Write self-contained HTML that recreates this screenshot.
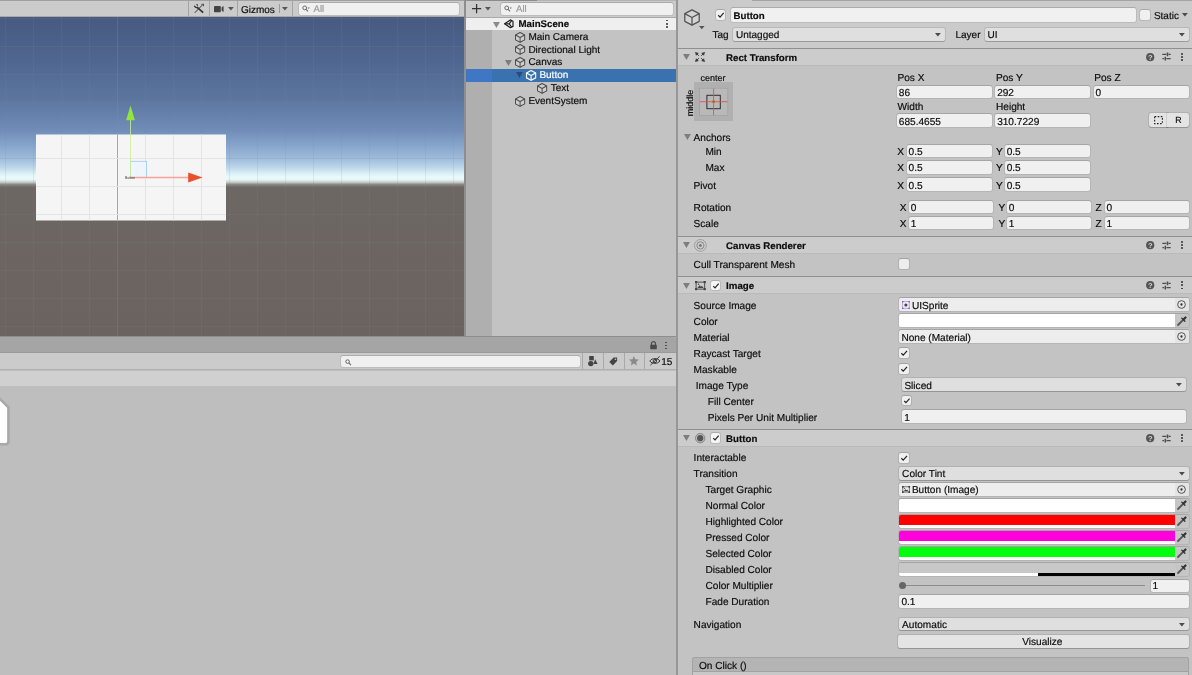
<!DOCTYPE html>
<html><head><meta charset="utf-8"><title>Unity Editor</title>
<style>
html,body{margin:0;padding:0;}
body{width:1192px;height:675px;overflow:hidden;background:#c3c3c3;position:relative;font-family:"Liberation Sans",sans-serif;}
.a,.t,.f,.dd,.cb,.btn{position:absolute;box-sizing:border-box;}
.t{white-space:nowrap;line-height:12px;letter-spacing:0;text-rendering:geometricPrecision;-webkit-text-stroke:0.18px currentColor;}
.f{border-radius:2px;box-shadow:0 0 0 1px rgba(0,0,0,.07),0 -1px 0 0 rgba(0,0,0,.09);}
.dd{background:#dfdfdf;border-radius:2px;box-shadow:0 0 0 1px rgba(0,0,0,.09),0 1px 0 0 rgba(0,0,0,.16);}
.cb{border-radius:2px;box-shadow:0 0 0 1px rgba(0,0,0,.09),0 -1px 0 0 rgba(0,0,0,.08);}
.btn{background:#e4e4e4;border-radius:2px;box-shadow:0 0 0 1px rgba(0,0,0,.09),0 1px 0 0 rgba(0,0,0,.16);}
svg{overflow:visible;}
#root{position:absolute;left:0;top:0;width:1192px;height:675px;will-change:transform;}
</style></head><body><div id="root">
<svg class="a" style="left:0.00px;top:0.00px;" width="465" height="337" viewBox="0 0 465 337"><defs><linearGradient id="sky" x1="0" y1="17.0" x2="0" y2="336.6" gradientUnits="userSpaceOnUse">
<stop offset="0" stop-color="#475a80"/>
<stop offset="0.1345" stop-color="#4f6690"/>
<stop offset="0.2597" stop-color="#5c769f"/>
<stop offset="0.3536" stop-color="#6f8db8"/>
<stop offset="0.4005" stop-color="#86a4cb"/>
<stop offset="0.4412" stop-color="#9dbada"/>
<stop offset="0.4693" stop-color="#bbd5e8"/>
<stop offset="0.4881" stop-color="#d8eef5"/>
<stop offset="0.5006" stop-color="#e8fbfb"/>
<stop offset="0.5084" stop-color="#e6f6f5"/>
<stop offset="0.5163" stop-color="#c9d2cf"/>
<stop offset="0.5241" stop-color="#8d8884"/>
<stop offset="0.5319" stop-color="#6d6763"/>
<stop offset="1" stop-color="#6a635f"/>
</linearGradient></defs>
<rect x="0" y="17.0" width="464.5" height="319.6" fill="url(#sky)"/>
<rect x="5.0" y="17.0" width="1" height="319.6" fill="#888888" opacity="0.15"/><rect x="33.0" y="17.0" width="1" height="319.6" fill="#888888" opacity="0.15"/><rect x="61.0" y="17.0" width="1" height="319.6" fill="#888888" opacity="0.15"/><rect x="89.0" y="17.0" width="1" height="319.6" fill="#888888" opacity="0.15"/><rect x="117.0" y="17.0" width="1" height="319.6" fill="#8c8c8c" opacity="0.32"/><rect x="145.0" y="17.0" width="1" height="319.6" fill="#888888" opacity="0.15"/><rect x="173.0" y="17.0" width="1" height="319.6" fill="#888888" opacity="0.15"/><rect x="201.0" y="17.0" width="1" height="319.6" fill="#888888" opacity="0.15"/><rect x="229.0" y="17.0" width="1" height="319.6" fill="#888888" opacity="0.15"/><rect x="257.0" y="17.0" width="1" height="319.6" fill="#888888" opacity="0.15"/><rect x="285.0" y="17.0" width="1" height="319.6" fill="#888888" opacity="0.15"/><rect x="313.0" y="17.0" width="1" height="319.6" fill="#888888" opacity="0.15"/><rect x="341.0" y="17.0" width="1" height="319.6" fill="#888888" opacity="0.15"/><rect x="369.0" y="17.0" width="1" height="319.6" fill="#888888" opacity="0.15"/><rect x="397.0" y="17.0" width="1" height="319.6" fill="#888888" opacity="0.15"/><rect x="425.0" y="17.0" width="1" height="319.6" fill="#888888" opacity="0.15"/><rect x="453.0" y="17.0" width="1" height="319.6" fill="#888888" opacity="0.15"/><rect x="0" y="18.0" width="464.5" height="1" fill="#888888" opacity="0.17"/><rect x="0" y="46.0" width="464.5" height="1" fill="#888888" opacity="0.17"/><rect x="0" y="74.0" width="464.5" height="1" fill="#888888" opacity="0.17"/><rect x="0" y="102.0" width="464.5" height="1" fill="#888888" opacity="0.17"/><rect x="0" y="130.0" width="464.5" height="1" fill="#888888" opacity="0.17"/><rect x="0" y="158.0" width="464.5" height="1" fill="#888888" opacity="0.17"/><rect x="0" y="186.0" width="464.5" height="1" fill="#888888" opacity="0.17"/><rect x="0" y="214.0" width="464.5" height="1" fill="#888888" opacity="0.17"/><rect x="0" y="242.0" width="464.5" height="1" fill="#888888" opacity="0.17"/><rect x="0" y="270.0" width="464.5" height="1" fill="#888888" opacity="0.17"/><rect x="0" y="298.0" width="464.5" height="1" fill="#888888" opacity="0.17"/><rect x="0" y="326.0" width="464.5" height="1" fill="#888888" opacity="0.17"/>
<rect x="36" y="134.5" width="190" height="86" fill="#f5f5f5"/>
<rect x="61.0" y="134.5" width="1" height="86" fill="#e4e4e4"/><rect x="89.0" y="134.5" width="1" height="86" fill="#e4e4e4"/><rect x="117.0" y="134.5" width="1" height="86" fill="#a6a6a6"/><rect x="145.0" y="134.5" width="1" height="86" fill="#e4e4e4"/><rect x="173.0" y="134.5" width="1" height="86" fill="#e4e4e4"/><rect x="201.0" y="134.5" width="1" height="86" fill="#e4e4e4"/><rect x="36" y="158.0" width="190" height="1" fill="#e4e4e4"/><rect x="36" y="186.0" width="190" height="1" fill="#e4e4e4"/><rect x="36" y="214.0" width="190" height="1" fill="#e4e4e4"/>
<rect x="130.5" y="161.3" width="16" height="16.2" fill="#eef5fd" stroke="#9cc6f2" stroke-width="0.8"/>
<path d="M130.5 120V177.5" stroke="#cdec98" stroke-width="0.8"/>
<path d="M130.5 105.5L126.1 120.2H134.9Z" fill="#8fe63c"/>
<path d="M130.5 177.5H189" stroke="#f6a496" stroke-width="1.3"/>
<path d="M202.6 177.5L188.2 172.5V182.5Z" fill="#e8512d"/>
<text x="125" y="178.6" font-size="3.4" fill="#333" font-family="Liberation Sans, sans-serif">Button</text>
</svg>
<div class="a" style="left:0.00px;top:0.00px;width:465.00px;height:17.00px;background:#cbcbcb;"></div>
<div class="a" style="left:0.00px;top:0.00px;width:465.00px;height:0.80px;background:#a0a0a0;"></div>
<div class="a" style="left:0.00px;top:16.40px;width:465.00px;height:0.80px;background:#a9a9a9;"></div>
<div class="a" style="left:188.40px;top:1.00px;width:1.00px;height:15.60px;background:#a4a4a4;"></div>
<div class="a" style="left:209.40px;top:1.00px;width:1.00px;height:15.60px;background:#a4a4a4;"></div>
<div class="a" style="left:237.40px;top:1.00px;width:1.00px;height:15.60px;background:#a4a4a4;"></div>
<div class="a" style="left:291.70px;top:1.00px;width:1.00px;height:15.60px;background:#a4a4a4;"></div>
<svg class="a" style="left:193.60px;top:4.20px;" width="10.4" height="9.2" viewBox="0 0 10.4 9.2"><g stroke="#333" fill="none"><path d="M0.8 8.8L8.2 1.2" stroke-width="1.0"/><path d="M7.4 0.4L9.6 0.2L9.4 2.2" stroke-width="0.9"/><path d="M3.2 3.4L9.2 8.6" stroke-width="1.7"/><path d="M0.4 1.8C0.9 3.6 2.8 4 3.9 3.1" stroke-width="1.3"/><path d="M2.6 0.2L3.8 1.6" stroke-width="1.1"/></g></svg>
<svg class="a" style="left:214.20px;top:5.60px;" width="10" height="6.4" viewBox="0 0 10 6.4"><rect x="0" y="0" width="6.8" height="6.2" rx="0.8" fill="#444"/><path d="M7.6 1.6C8.4 0.6 9 0.2 9.6 0.2V6C9 6 8.4 5.6 7.6 4.6Z" fill="#444"/></svg>
<svg class="a" style="left:227.90px;top:7.10px;" width="5.8" height="3.6" viewBox="0 0 5.8 3.6"><path d="M0 0H5.8L2.9 3.6Z" fill="#555"/></svg>
<div class="t" style="left:240.90px;top:5.00px;font-size:10px;color:#0d0d0d;">Gizmos</div>
<div class="a" style="left:278.60px;top:4.20px;width:0.90px;height:9.20px;background:#999;"></div>
<svg class="a" style="left:282.40px;top:7.10px;" width="5.8" height="3.6" viewBox="0 0 5.8 3.6"><path d="M0 0H5.8L2.9 3.6Z" fill="#555"/></svg>
<div class="f" style="left:298.60px;top:3.00px;width:160.00px;height:11.60px;background:#f0f0f0;"></div>
<svg class="a" style="left:302.20px;top:5.30px;" width="8" height="7" viewBox="0 0 8 7"><circle cx="2.7" cy="2.9" r="1.9" fill="none" stroke="#6a6a6a" stroke-width="1"/><path d="M4.1 4.4L6 6.4" stroke="#6a6a6a" stroke-width="1.1"/><path d="M5.6 2.6h2.2l-1.1 1.3z" fill="#6a6a6a"/></svg>
<div class="t" style="left:313.50px;top:4.00px;font-size:9.6px;color:#9a9a9a;">All</div>
<div class="a" style="left:464.30px;top:0.00px;width:1.70px;height:337.00px;background:#8e8e8e;"></div>
<div class="a" style="left:466.00px;top:0.00px;width:210.20px;height:337.00px;background:#c3c3c3;"></div>
<div class="a" style="left:466.00px;top:17.60px;width:25.60px;height:319.40px;background:#afafaf;"></div>
<div class="a" style="left:466.00px;top:0.00px;width:210.20px;height:17.60px;background:#cbcbcb;"></div>
<div class="a" style="left:466.00px;top:0.00px;width:71.00px;height:0.80px;background:#8c8c8c;"></div>
<div class="a" style="left:537.00px;top:0.00px;width:139.20px;height:0.80px;background:#b4b4b4;"></div>
<div class="a" style="left:466.00px;top:17.00px;width:210.20px;height:0.80px;background:#a9a9a9;"></div>
<svg class="a" style="left:471.60px;top:4.20px;" width="9.2" height="9.2" viewBox="0 0 9.2 9.2"><path d="M4.6 0V9.2M0 4.6H9.2" stroke="#333" stroke-width="1.25"/></svg>
<svg class="a" style="left:485.00px;top:7.00px;" width="5.8" height="3.6" viewBox="0 0 5.8 3.6"><path d="M0 0H5.8L2.9 3.6Z" fill="#555"/></svg>
<div class="f" style="left:501.00px;top:3.00px;width:172.00px;height:11.60px;background:#f0f0f0;"></div>
<svg class="a" style="left:504.30px;top:5.30px;" width="8" height="7" viewBox="0 0 8 7"><circle cx="2.7" cy="2.9" r="1.9" fill="none" stroke="#6a6a6a" stroke-width="1"/><path d="M4.1 4.4L6 6.4" stroke="#6a6a6a" stroke-width="1.1"/><path d="M5.6 2.6h2.2l-1.1 1.3z" fill="#6a6a6a"/></svg>
<div class="t" style="left:516.00px;top:4.00px;font-size:9.6px;color:#9a9a9a;">All</div>
<div class="a" style="left:466.00px;top:17.90px;width:210.20px;height:12.40px;background:#efefef;"></div>
<svg class="a" style="left:493.45px;top:21.70px;" width="6.9" height="6.0" viewBox="0 0 6.9 6.0"><path d="M0 0H6.9L3.45 6.0Z" fill="#8a8a8a"/></svg>
<svg class="a" style="left:504.00px;top:18.70px;" width="9.6" height="9.6" viewBox="0 0 9.6 9.6"><g fill="none" stroke="#222" stroke-width="1.2" stroke-linejoin="round"><path d="M0.6 4.8L6.4 0.9L9 2.2V7.4L6.4 8.7Z"/><path d="M0.6 4.8H5.2M5.2 4.8L7.6 1.6M5.2 4.8L7.6 8"/></g></svg>
<div class="t" style="left:518.50px;top:19.00px;font-size:9.7px;color:#0d0d0d;font-weight:bold;">MainScene</div>
<div class="a" style="left:666.15px;top:19.95px;width:1.50px;height:1.50px;background:#444;border-radius:50%;"></div>
<div class="a" style="left:666.15px;top:23.05px;width:1.50px;height:1.50px;background:#444;border-radius:50%;"></div>
<div class="a" style="left:666.15px;top:26.15px;width:1.50px;height:1.50px;background:#444;border-radius:50%;"></div>
<svg class="a" style="left:514.80px;top:31.50px;" width="10.2" height="10.9" viewBox="0 0 16 16" preserveAspectRatio="none"><path d="M8 0.8L15.2 4.4V11.6L8 15.2L0.8 11.6V4.4Z" fill="#cfcfcf"/><g fill="none" stroke="#4c4c4c" stroke-width="1.57" stroke-linejoin="round"><path d="M8 0.8L15.2 4.4V11.6L8 15.2L0.8 11.6V4.4Z"/><path d="M0.8 4.4L8 8L15.2 4.4M8 8V15.2"/></g></svg>
<div class="t" style="left:528.40px;top:32.00px;font-size:10px;color:#0d0d0d;">Main Camera</div>
<svg class="a" style="left:514.80px;top:44.30px;" width="10.2" height="10.9" viewBox="0 0 16 16" preserveAspectRatio="none"><path d="M8 0.8L15.2 4.4V11.6L8 15.2L0.8 11.6V4.4Z" fill="#cfcfcf"/><g fill="none" stroke="#4c4c4c" stroke-width="1.57" stroke-linejoin="round"><path d="M8 0.8L15.2 4.4V11.6L8 15.2L0.8 11.6V4.4Z"/><path d="M0.8 4.4L8 8L15.2 4.4M8 8V15.2"/></g></svg>
<div class="t" style="left:528.40px;top:45.00px;font-size:10px;color:#0d0d0d;">Directional Light</div>
<svg class="a" style="left:504.65px;top:59.60px;" width="6.9" height="6.0" viewBox="0 0 6.9 6.0"><path d="M0 0H6.9L3.45 6.0Z" fill="#7d7d7d"/></svg>
<svg class="a" style="left:514.80px;top:57.10px;" width="10.2" height="10.9" viewBox="0 0 16 16" preserveAspectRatio="none"><path d="M8 0.8L15.2 4.4V11.6L8 15.2L0.8 11.6V4.4Z" fill="#cfcfcf"/><g fill="none" stroke="#4c4c4c" stroke-width="1.57" stroke-linejoin="round"><path d="M8 0.8L15.2 4.4V11.6L8 15.2L0.8 11.6V4.4Z"/><path d="M0.8 4.4L8 8L15.2 4.4M8 8V15.2"/></g></svg>
<div class="t" style="left:528.40px;top:57.00px;font-size:10px;color:#0d0d0d;">Canvas</div>
<div class="a" style="left:466.00px;top:69.00px;width:210.20px;height:12.50px;background:#3a72b0;"></div>
<div class="a" style="left:466.00px;top:69.00px;width:25.60px;height:12.50px;background:#3f77c4;"></div>
<svg class="a" style="left:515.65px;top:72.40px;" width="6.9" height="6.0" viewBox="0 0 6.9 6.0"><path d="M0 0H6.9L3.45 6.0Z" fill="#2a4d78"/></svg>
<svg class="a" style="left:525.80px;top:69.90px;" width="10.2" height="10.9" viewBox="0 0 16 16" preserveAspectRatio="none"><g fill="none" stroke="#ffffff" stroke-width="1.73" stroke-linejoin="round"><path d="M8 0.8L15.2 4.4V11.6L8 15.2L0.8 11.6V4.4Z"/><path d="M0.8 4.4L8 8L15.2 4.4M8 8V15.2"/></g></svg>
<div class="t" style="left:539.40px;top:70.00px;font-size:10px;color:#fff;">Button</div>
<svg class="a" style="left:536.80px;top:82.70px;" width="10.2" height="10.9" viewBox="0 0 16 16" preserveAspectRatio="none"><path d="M8 0.8L15.2 4.4V11.6L8 15.2L0.8 11.6V4.4Z" fill="#cfcfcf"/><g fill="none" stroke="#4c4c4c" stroke-width="1.57" stroke-linejoin="round"><path d="M8 0.8L15.2 4.4V11.6L8 15.2L0.8 11.6V4.4Z"/><path d="M0.8 4.4L8 8L15.2 4.4M8 8V15.2"/></g></svg>
<div class="t" style="left:550.70px;top:83.00px;font-size:10px;color:#0d0d0d;">Text</div>
<svg class="a" style="left:514.80px;top:95.50px;" width="10.2" height="10.9" viewBox="0 0 16 16" preserveAspectRatio="none"><path d="M8 0.8L15.2 4.4V11.6L8 15.2L0.8 11.6V4.4Z" fill="#cfcfcf"/><g fill="none" stroke="#4c4c4c" stroke-width="1.57" stroke-linejoin="round"><path d="M8 0.8L15.2 4.4V11.6L8 15.2L0.8 11.6V4.4Z"/><path d="M0.8 4.4L8 8L15.2 4.4M8 8V15.2"/></g></svg>
<div class="t" style="left:528.40px;top:96.00px;font-size:10px;color:#0d0d0d;">EventSystem</div>
<div class="a" style="left:0.00px;top:336.60px;width:676.20px;height:338.40px;background:#bebebe;"></div>
<div class="a" style="left:0.00px;top:336.60px;width:676.20px;height:16.00px;background:#a5a5a5;border-radius:0 2px 0 0;"></div>
<div class="a" style="left:0.00px;top:336.40px;width:676.20px;height:0.90px;background:#8e8e8e;"></div>
<div class="a" style="left:0.00px;top:352.60px;width:676.20px;height:17.00px;background:#cbcbcb;"></div>
<div class="a" style="left:0.00px;top:352.30px;width:676.20px;height:0.70px;background:#999;"></div>
<div class="a" style="left:0.00px;top:369.30px;width:676.20px;height:1.20px;background:#b0b0b0;"></div>
<div class="a" style="left:0.00px;top:370.50px;width:676.20px;height:15.20px;background:#d0d0d0;"></div>
<svg class="a" style="left:649.70px;top:341.20px;" width="7" height="8.4" viewBox="0 0 7 8.4"><path d="M1.5 4V2.6a2 2 0 0 1 4 0V4" fill="none" stroke="#4a4a4a" stroke-width="1.2"/><rect x="0.2" y="3.8" width="6.6" height="4.4" rx="0.6" fill="#4a4a4a"/></svg>
<div class="a" style="left:665.35px;top:341.75px;width:1.50px;height:1.50px;background:#444;border-radius:50%;"></div>
<div class="a" style="left:665.35px;top:344.85px;width:1.50px;height:1.50px;background:#444;border-radius:50%;"></div>
<div class="a" style="left:665.35px;top:347.95px;width:1.50px;height:1.50px;background:#444;border-radius:50%;"></div>
<div class="f" style="left:340.60px;top:355.60px;width:239.60px;height:11.80px;background:#f0f0f0;"></div>
<svg class="a" style="left:345.20px;top:358.60px;" width="7" height="7" viewBox="0 0 7 7"><circle cx="2.6" cy="2.6" r="1.8" fill="none" stroke="#666" stroke-width="1"/><path d="M4 4L6 6.2" stroke="#666" stroke-width="1.1"/></svg>
<div class="a" style="left:582.00px;top:353.20px;width:1.00px;height:16.00px;background:#a9a9a9;"></div>
<div class="a" style="left:602.90px;top:353.20px;width:1.00px;height:16.00px;background:#a9a9a9;"></div>
<div class="a" style="left:623.50px;top:353.20px;width:1.00px;height:16.00px;background:#a9a9a9;"></div>
<div class="a" style="left:643.90px;top:353.20px;width:1.00px;height:16.00px;background:#a9a9a9;"></div>
<svg class="a" style="left:587.50px;top:356.00px;" width="9.6" height="10.4" viewBox="0 0 9.6 10.4"><rect x="1.2" y="0" width="4.6" height="4.4" fill="#444"/><circle cx="2.8" cy="7.6" r="2.7" fill="#444"/><path d="M7.2 3.2L9.6 8H5.4Z" fill="#444"/></svg>
<svg class="a" style="left:608.60px;top:356.60px;" width="8.6" height="8.6" viewBox="0 0 8.6 8.6"><path d="M0.3 4.9L4.6 0.6H8.1V4.1L3.8 8.4Z" fill="#444"/><circle cx="6.5" cy="2.2" r="0.8" fill="#cbcbcb"/></svg>
<svg class="a" style="left:629.20px;top:356.20px;" width="9.8" height="9.4" viewBox="0 0 9.8 9.4"><path d="M4.9 0L6.3 3.2L9.8 3.6L7.2 5.9L7.9 9.4L4.9 7.6L1.9 9.4L2.6 5.9L0 3.6L3.5 3.2Z" fill="#8a8a8a"/></svg>
<svg class="a" style="left:648.60px;top:356.40px;" width="12.2" height="9.6" viewBox="0 0 12.2 9.6"><g fill="none" stroke="#333" stroke-width="0.95"><path d="M0.8 5C3 1.8 8.6 1.8 11 5C8.6 8.2 3 8.2 0.8 5Z"/><circle cx="5.9" cy="5" r="1.7"/><path d="M1.4 9.2L10.6 0.4"/></g></svg>
<div class="t" style="left:661.20px;top:357.00px;font-size:10px;color:#0d0d0d;">15</div>
<svg class="a" style="left:0.00px;top:396.00px;overflow:hidden;" width="12" height="52" viewBox="0 0 12 52"><path d="M-3 0.1L8.45 11.2V45.6Q8.45 48.2 5.8 48.2H-3Z" fill="#fff" stroke="#a9a9a9" stroke-width="2.6" stroke-linejoin="round"/></svg>
<div class="a" style="left:676.20px;top:0.00px;width:1.90px;height:675.00px;background:#979797;"></div>
<div class="a" style="left:678.00px;top:0.00px;width:514.00px;height:675.00px;background:#c3c3c3;"></div>
<div class="a" style="left:678.00px;top:0.00px;width:514.00px;height:48.00px;background:#cbcbcb;"></div>
<div class="a" style="left:752.00px;top:0.00px;width:440.00px;height:0.80px;background:#a4a4a4;"></div>
<svg class="a" style="left:683.70px;top:8.70px;" width="16.0" height="17.0" viewBox="0 0 16 16" preserveAspectRatio="none"><path d="M8 0.8L15.2 4.4V11.6L8 15.2L0.8 11.6V4.4Z" fill="#d4d4d4"/><g fill="none" stroke="#525252" stroke-width="1.25" stroke-linejoin="round"><path d="M8 0.8L15.2 4.4V11.6L8 15.2L0.8 11.6V4.4Z"/><path d="M0.8 4.4L8 8L15.2 4.4M8 8V15.2"/></g></svg>
<svg class="a" style="left:699.10px;top:25.60px;" width="5.6" height="3.2" viewBox="0 0 5.6 3.2"><path d="M0 0H5.6L2.8 3.2Z" fill="#555"/></svg>
<div class="cb" style="left:715.60px;top:10.00px;width:9.60px;height:10.00px;background:#f0f0f0;"></div>
<svg class="a" style="left:715.60px;top:10.00px;" width="9.6" height="10" viewBox="0 0 10.2 10.2"><path d="M2.4 5.4L4.3 7.3L8.2 2.9" fill="none" stroke="#222" stroke-width="1.25"/></svg>
<div class="f" style="left:731.00px;top:8.10px;width:405.20px;height:13.80px;background:#f0f0f0;"></div>
<div class="t" style="left:733.50px;top:11.00px;font-size:9.7px;color:#0d0d0d;font-weight:bold;">Button</div>
<div class="cb" style="left:1140.20px;top:10.00px;width:9.60px;height:10.00px;background:#f0f0f0;"></div>
<div class="t" style="left:1153.90px;top:11.00px;font-size:10px;color:#0d0d0d;">Static</div>
<svg class="a" style="left:1182.00px;top:13.20px;" width="5.8" height="3.6" viewBox="0 0 5.8 3.6"><path d="M0 0H5.8L2.9 3.6Z" fill="#4a4a4a"/></svg>
<div class="t" style="left:712.50px;top:30.00px;font-size:10px;color:#0d0d0d;">Tag</div>
<div class="dd" style="left:732.90px;top:28.00px;width:212.20px;height:13.20px;"></div>
<svg class="a" style="left:935.10px;top:33.05px;" width="5.8" height="3.5" viewBox="0 0 5.8 3.5"><path d="M0 0H5.8L2.9 3.5Z" fill="#4a4a4a"/></svg>
<div class="t" style="left:736.00px;top:30.00px;font-size:10px;color:#0d0d0d;">Untagged</div>
<div class="t" style="left:955.50px;top:30.00px;font-size:10px;color:#0d0d0d;">Layer</div>
<div class="dd" style="left:984.80px;top:28.00px;width:204.20px;height:13.20px;"></div>
<svg class="a" style="left:1178.60px;top:33.05px;" width="5.8" height="3.5" viewBox="0 0 5.8 3.5"><path d="M0 0H5.8L2.9 3.5Z" fill="#4a4a4a"/></svg>
<div class="t" style="left:987.60px;top:30.00px;font-size:10px;color:#0d0d0d;">UI</div>
<div class="a" style="left:678.00px;top:47.60px;width:514.00px;height:1.00px;background:#8f8f8f;"></div>
<div class="a" style="left:678.00px;top:48.60px;width:514.00px;height:16.40px;background:#cccccc;"></div>
<div class="a" style="left:678.00px;top:64.80px;width:514.00px;height:1.00px;background:#bababa;"></div>
<svg class="a" style="left:683.00px;top:54.00px;" width="6.9" height="6.0" viewBox="0 0 6.9 6.0"><path d="M0 0H6.9L3.45 6.0Z" fill="#7d7d7d"/></svg>
<svg class="a" style="left:695.30px;top:52.20px;" width="10" height="10" viewBox="0 0 10 10"><g fill="#3c3c3c"><path d="M0.0 0.0L3.8 1.0L1.0 3.8Z"/><path d="M1.6 1.6L3.8 3.8" stroke="#3c3c3c" stroke-width="1.0"/><g transform="rotate(90 5 5)"><path d="M0.0 0.0L3.8 1.0L1.0 3.8Z"/><path d="M1.6 1.6L3.8 3.8" stroke="#3c3c3c" stroke-width="1.0"/></g><g transform="rotate(180 5 5)"><path d="M0.0 0.0L3.8 1.0L1.0 3.8Z"/><path d="M1.6 1.6L3.8 3.8" stroke="#3c3c3c" stroke-width="1.0"/></g><g transform="rotate(270 5 5)"><path d="M0.0 0.0L3.8 1.0L1.0 3.8Z"/><path d="M1.6 1.6L3.8 3.8" stroke="#3c3c3c" stroke-width="1.0"/></g></g></svg>
<div class="t" style="left:726.10px;top:53.00px;font-size:9.7px;color:#0d0d0d;font-weight:bold;">Rect Transform</div>
<svg class="a" style="left:1146.05px;top:52.70px;" width="8.4" height="8.4" viewBox="0 0 8.4 8.4"><circle cx="4.2" cy="4.2" r="4.1" fill="#555"/><text x="4.2" y="6.9" font-size="7.6" font-weight="bold" text-anchor="middle" fill="#d6d6d6" font-family="Liberation Sans, sans-serif">?</text></svg>
<svg class="a" style="left:1161.60px;top:52.40px;" width="9" height="9" viewBox="0 0 9 9"><g stroke="#4d4d4d" stroke-width="1.1" fill="none"><path d="M0.3 2.4H4.4M6.5 2.4H8.7M0.4 6.6H2.0M4.4 6.6H8.7"/><path d="M5.5 0.6V4.2M3.3 4.8V8.4" stroke-width="1.5"/></g></svg>
<div class="a" style="left:1181.45px;top:52.85px;width:1.90px;height:1.90px;background:#333;border-radius:50%;"></div>
<div class="a" style="left:1181.45px;top:55.95px;width:1.90px;height:1.90px;background:#333;border-radius:50%;"></div>
<div class="a" style="left:1181.45px;top:59.05px;width:1.90px;height:1.90px;background:#333;border-radius:50%;"></div>
<div class="t" style="left:700.50px;top:72.00px;font-size:9px;color:#0d0d0d;">center</div>
<div class="t" style="left:690.2px;top:102.8px;font-size:9px;color:#0d0d0d;transform:translate(-50%,-50%) rotate(-90deg);">middle</div>
<div class="a" style="left:694.00px;top:82.10px;width:39.00px;height:39.20px;background:#b0b0b0;"></div>
<svg class="a" style="left:694.00px;top:82.10px;" width="39" height="39.2" viewBox="0 0 39 39.2"><rect x="5.6" y="6.2" width="28.2" height="27.4" fill="#b9b9b9" stroke="#a0a0a0" stroke-width="0.7"/><rect x="12.9" y="13.3" width="13.4" height="13.4" fill="none" stroke="#2e2e2e" stroke-width="1"/><path d="M19.6 6.6V33.2M6 19.7H33.4" stroke="#e05252" stroke-width="0.9"/><circle cx="19.6" cy="19.7" r="1.35" fill="#b06a00"/></svg>
<div class="t" style="left:897.50px;top:73.00px;font-size:10.1px;color:#0d0d0d;">Pos X</div>
<div class="t" style="left:996.00px;top:73.00px;font-size:10.1px;color:#0d0d0d;">Pos Y</div>
<div class="t" style="left:1094.20px;top:73.00px;font-size:10.1px;color:#0d0d0d;">Pos Z</div>
<div class="f" style="left:896.90px;top:85.90px;width:95.20px;height:12.20px;background:#f0f0f0;"></div>
<div class="t" style="left:898.80px;top:88.00px;font-size:10.1px;color:#0d0d0d;">86</div>
<div class="f" style="left:995.25px;top:85.90px;width:95.20px;height:12.20px;background:#f0f0f0;"></div>
<div class="t" style="left:997.15px;top:88.00px;font-size:10.1px;color:#0d0d0d;">292</div>
<div class="f" style="left:1093.60px;top:85.90px;width:95.20px;height:12.20px;background:#f0f0f0;"></div>
<div class="t" style="left:1095.50px;top:88.00px;font-size:10.1px;color:#0d0d0d;">0</div>
<div class="t" style="left:897.50px;top:102.00px;font-size:10.1px;color:#0d0d0d;">Width</div>
<div class="t" style="left:996.00px;top:102.00px;font-size:10.1px;color:#0d0d0d;">Height</div>
<div class="f" style="left:896.90px;top:114.30px;width:95.20px;height:12.60px;background:#f0f0f0;"></div>
<div class="t" style="left:898.80px;top:117.00px;font-size:10.1px;color:#0d0d0d;">685.4655</div>
<div class="f" style="left:995.25px;top:114.30px;width:95.20px;height:12.60px;background:#f0f0f0;"></div>
<div class="t" style="left:997.15px;top:117.00px;font-size:10.1px;color:#0d0d0d;">310.7229</div>
<div class="btn" style="left:1148.90px;top:112.80px;width:19.00px;height:14.30px;border-radius:2.4px 0 0 2.4px;"></div>
<div class="btn" style="left:1167.40px;top:112.80px;width:21.60px;height:14.30px;border-radius:0 2.4px 2.4px 0;"></div>
<svg class="a" style="left:1154.00px;top:115.90px;" width="9" height="8.2" viewBox="0 0 9 8.2"><rect x="0.6" y="0.6" width="7.8" height="7" fill="none" stroke="#222" stroke-width="1.1" stroke-dasharray="1.6 1.5"/></svg>
<div class="t" style="left:1175.30px;top:114.00px;font-size:8.8px;color:#0d0d0d;">R</div>
<svg class="a" style="left:683.65px;top:134.40px;" width="6.9" height="6.0" viewBox="0 0 6.9 6.0"><path d="M0 0H6.9L3.45 6.0Z" fill="#7d7d7d"/></svg>
<div class="t" style="left:693.60px;top:133.00px;font-size:10.1px;color:#0d0d0d;">Anchors</div>
<div class="t" style="left:705.40px;top:147.00px;font-size:10.1px;color:#0d0d0d;">Min</div>
<div class="t" style="left:897.25px;top:147.00px;font-size:10.1px;color:#0d0d0d;">X</div>
<div class="f" style="left:906.90px;top:144.60px;width:85.20px;height:12.60px;background:#f0f0f0;"></div>
<div class="t" style="left:908.60px;top:147.00px;font-size:10.1px;color:#0d0d0d;">0.5</div>
<div class="t" style="left:996.00px;top:147.00px;font-size:10.1px;color:#0d0d0d;">Y</div>
<div class="f" style="left:1005.00px;top:144.60px;width:85.25px;height:12.60px;background:#f0f0f0;"></div>
<div class="t" style="left:1006.70px;top:147.00px;font-size:10.1px;color:#0d0d0d;">0.5</div>
<div class="t" style="left:705.40px;top:163.00px;font-size:10.1px;color:#0d0d0d;">Max</div>
<div class="t" style="left:897.25px;top:163.00px;font-size:10.1px;color:#0d0d0d;">X</div>
<div class="f" style="left:906.90px;top:161.00px;width:85.20px;height:12.60px;background:#f0f0f0;"></div>
<div class="t" style="left:908.60px;top:163.00px;font-size:10.1px;color:#0d0d0d;">0.5</div>
<div class="t" style="left:996.00px;top:163.00px;font-size:10.1px;color:#0d0d0d;">Y</div>
<div class="f" style="left:1005.00px;top:161.00px;width:85.25px;height:12.60px;background:#f0f0f0;"></div>
<div class="t" style="left:1006.70px;top:163.00px;font-size:10.1px;color:#0d0d0d;">0.5</div>
<div class="t" style="left:693.60px;top:181.00px;font-size:10.1px;color:#0d0d0d;">Pivot</div>
<div class="t" style="left:897.25px;top:181.00px;font-size:10.1px;color:#0d0d0d;">X</div>
<div class="f" style="left:906.90px;top:178.40px;width:85.20px;height:12.50px;background:#f0f0f0;"></div>
<div class="t" style="left:908.60px;top:181.00px;font-size:10.1px;color:#0d0d0d;">0.5</div>
<div class="t" style="left:996.00px;top:181.00px;font-size:10.1px;color:#0d0d0d;">Y</div>
<div class="f" style="left:1005.00px;top:178.40px;width:85.25px;height:12.50px;background:#f0f0f0;"></div>
<div class="t" style="left:1006.70px;top:181.00px;font-size:10.1px;color:#0d0d0d;">0.5</div>
<div class="t" style="left:693.60px;top:203.00px;font-size:10.1px;color:#0d0d0d;">Rotation</div>
<div class="t" style="left:899.75px;top:203.00px;font-size:10.1px;color:#0d0d0d;">X</div>
<div class="f" style="left:909.00px;top:200.80px;width:84.10px;height:12.30px;background:#f0f0f0;"></div>
<div class="t" style="left:910.70px;top:203.00px;font-size:10.1px;color:#0d0d0d;">0</div>
<div class="t" style="left:998.50px;top:203.00px;font-size:10.1px;color:#0d0d0d;">Y</div>
<div class="f" style="left:1007.10px;top:200.80px;width:84.00px;height:12.30px;background:#f0f0f0;"></div>
<div class="t" style="left:1008.80px;top:203.00px;font-size:10.1px;color:#0d0d0d;">0</div>
<div class="t" style="left:1095.50px;top:203.00px;font-size:10.1px;color:#0d0d0d;">Z</div>
<div class="f" style="left:1104.90px;top:200.80px;width:84.10px;height:12.30px;background:#f0f0f0;"></div>
<div class="t" style="left:1106.60px;top:203.00px;font-size:10.1px;color:#0d0d0d;">0</div>
<div class="t" style="left:693.60px;top:219.00px;font-size:10.1px;color:#0d0d0d;">Scale</div>
<div class="t" style="left:899.75px;top:219.00px;font-size:10.1px;color:#0d0d0d;">X</div>
<div class="f" style="left:909.00px;top:217.00px;width:84.10px;height:12.30px;background:#f0f0f0;"></div>
<div class="t" style="left:910.70px;top:219.00px;font-size:10.1px;color:#0d0d0d;">1</div>
<div class="t" style="left:998.50px;top:219.00px;font-size:10.1px;color:#0d0d0d;">Y</div>
<div class="f" style="left:1007.10px;top:217.00px;width:84.00px;height:12.30px;background:#f0f0f0;"></div>
<div class="t" style="left:1008.80px;top:219.00px;font-size:10.1px;color:#0d0d0d;">1</div>
<div class="t" style="left:1095.50px;top:219.00px;font-size:10.1px;color:#0d0d0d;">Z</div>
<div class="f" style="left:1104.90px;top:217.00px;width:84.10px;height:12.30px;background:#f0f0f0;"></div>
<div class="t" style="left:1106.60px;top:219.00px;font-size:10.1px;color:#0d0d0d;">1</div>
<div class="a" style="left:678.00px;top:235.90px;width:514.00px;height:1.00px;background:#8f8f8f;"></div>
<div class="a" style="left:678.00px;top:236.90px;width:514.00px;height:16.20px;background:#cccccc;"></div>
<div class="a" style="left:678.00px;top:252.90px;width:514.00px;height:1.00px;background:#bababa;"></div>
<svg class="a" style="left:683.00px;top:242.20px;" width="6.9" height="6.0" viewBox="0 0 6.9 6.0"><path d="M0 0H6.9L3.45 6.0Z" fill="#7d7d7d"/></svg>
<svg class="a" style="left:694.10px;top:238.70px;" width="12.8" height="12.8" viewBox="0 0 12.8 12.8"><circle cx="6.4" cy="6.4" r="5.9" fill="none" stroke="#8a8a8a" stroke-width="0.7"/><circle cx="6.4" cy="6.4" r="3.6" fill="none" stroke="#777" stroke-width="0.8"/><circle cx="6.4" cy="6.4" r="1.5" fill="#777"/></svg>
<div class="t" style="left:726.10px;top:241.00px;font-size:9.7px;color:#0d0d0d;font-weight:bold;">Canvas Renderer</div>
<svg class="a" style="left:1146.05px;top:240.90px;" width="8.4" height="8.4" viewBox="0 0 8.4 8.4"><circle cx="4.2" cy="4.2" r="4.1" fill="#555"/><text x="4.2" y="6.9" font-size="7.6" font-weight="bold" text-anchor="middle" fill="#d6d6d6" font-family="Liberation Sans, sans-serif">?</text></svg>
<svg class="a" style="left:1161.60px;top:240.60px;" width="9" height="9" viewBox="0 0 9 9"><g stroke="#4d4d4d" stroke-width="1.1" fill="none"><path d="M0.3 2.4H4.4M6.5 2.4H8.7M0.4 6.6H2.0M4.4 6.6H8.7"/><path d="M5.5 0.6V4.2M3.3 4.8V8.4" stroke-width="1.5"/></g></svg>
<div class="a" style="left:1181.45px;top:241.05px;width:1.90px;height:1.90px;background:#333;border-radius:50%;"></div>
<div class="a" style="left:1181.45px;top:244.15px;width:1.90px;height:1.90px;background:#333;border-radius:50%;"></div>
<div class="a" style="left:1181.45px;top:247.25px;width:1.90px;height:1.90px;background:#333;border-radius:50%;"></div>
<div class="t" style="left:693.60px;top:260.00px;font-size:10.1px;color:#0d0d0d;">Cull Transparent Mesh</div>
<div class="cb" style="left:899.00px;top:259.00px;width:10.00px;height:10.00px;background:#ededed;"></div>
<div class="a" style="left:678.00px;top:276.30px;width:514.00px;height:1.00px;background:#8f8f8f;"></div>
<div class="a" style="left:678.00px;top:277.30px;width:514.00px;height:16.00px;background:#cccccc;"></div>
<div class="a" style="left:678.00px;top:293.10px;width:514.00px;height:1.00px;background:#bababa;"></div>
<svg class="a" style="left:683.00px;top:282.50px;" width="6.9" height="6.0" viewBox="0 0 6.9 6.0"><path d="M0 0H6.9L3.45 6.0Z" fill="#7d7d7d"/></svg>
<svg class="a" style="left:694.90px;top:280.80px;" width="10.8" height="9.2" viewBox="0 0 10.8 9.2"><rect x="1.1" y="1.1" width="8.6" height="7" fill="none" stroke="#444" stroke-width="0.9"/><g fill="#444"><rect x="0" y="0" width="2.2" height="2.2"/><rect x="8.6" y="0" width="2.2" height="2.2"/><rect x="0" y="7" width="2.2" height="2.2"/><rect x="8.6" y="7" width="2.2" height="2.2"/><path d="M2.4 6.9L4.6 4.2L6 5.8L7 4.8L8.6 6.9Z"/><circle cx="3.6" cy="3.2" r="0.7"/></g></svg>
<div class="cb" style="left:710.75px;top:280.50px;width:9.60px;height:9.60px;background:#f5f5f5;"></div>
<svg class="a" style="left:710.75px;top:280.50px;" width="9.6" height="9.6" viewBox="0 0 10.2 10.2"><path d="M2.4 5.4L4.3 7.3L8.2 2.9" fill="none" stroke="#222" stroke-width="1.25"/></svg>
<div class="t" style="left:726.10px;top:281.00px;font-size:9.7px;color:#0d0d0d;font-weight:bold;">Image</div>
<svg class="a" style="left:1146.05px;top:281.20px;" width="8.4" height="8.4" viewBox="0 0 8.4 8.4"><circle cx="4.2" cy="4.2" r="4.1" fill="#555"/><text x="4.2" y="6.9" font-size="7.6" font-weight="bold" text-anchor="middle" fill="#d6d6d6" font-family="Liberation Sans, sans-serif">?</text></svg>
<svg class="a" style="left:1161.60px;top:280.90px;" width="9" height="9" viewBox="0 0 9 9"><g stroke="#4d4d4d" stroke-width="1.1" fill="none"><path d="M0.3 2.4H4.4M6.5 2.4H8.7M0.4 6.6H2.0M4.4 6.6H8.7"/><path d="M5.5 0.6V4.2M3.3 4.8V8.4" stroke-width="1.5"/></g></svg>
<div class="a" style="left:1181.45px;top:281.35px;width:1.90px;height:1.90px;background:#333;border-radius:50%;"></div>
<div class="a" style="left:1181.45px;top:284.45px;width:1.90px;height:1.90px;background:#333;border-radius:50%;"></div>
<div class="a" style="left:1181.45px;top:287.55px;width:1.90px;height:1.90px;background:#333;border-radius:50%;"></div>
<div class="t" style="left:693.60px;top:301.00px;font-size:10.1px;color:#0d0d0d;">Source Image</div>
<div class="f" style="left:899.00px;top:298.20px;width:290.00px;height:12.70px;background:#ededed;"></div>
<div class="a" style="left:1174.60px;top:298.20px;width:14.40px;height:12.70px;background:#e4e4e4;border-radius:0 2px 2px 0;"></div>
<svg class="a" style="left:1177.10px;top:300.15px;" width="9" height="9" viewBox="0 0 9 9"><circle cx="4.5" cy="4.5" r="3.85" fill="none" stroke="#444" stroke-width="0.9"/><circle cx="4.5" cy="4.5" r="1.15" fill="#333"/></svg>
<svg class="a" style="left:901.90px;top:301.40px;" width="7.9" height="8.0" viewBox="0 0 7.9 8.0"><rect x="0.6" y="0.6" width="6.7" height="6.8" fill="none" stroke="#b3a5d8" stroke-width="0.9"/><g fill="#7c3fe0"><circle cx="0.8" cy="0.8" r="0.8"/><circle cx="7.1" cy="0.8" r="0.8"/><circle cx="0.8" cy="7.2" r="0.8"/><circle cx="7.1" cy="7.2" r="0.8"/></g><circle cx="3.9" cy="4.0" r="1.55" fill="#444"/></svg>
<div class="t" style="left:912.00px;top:301.00px;font-size:10.1px;color:#0d0d0d;">UISprite</div>
<div class="t" style="left:693.60px;top:317.00px;font-size:10.1px;color:#0d0d0d;">Color</div>
<div class="f" style="left:899.00px;top:314.10px;width:290.00px;height:13.00px;background:#c6c6c6;"></div>
<div class="a" style="left:899.00px;top:314.10px;width:275.60px;height:13.00px;background:#ffffff;border-radius:2px 0 0 2px;"></div>
<div class="a" style="left:899.00px;top:324.30px;width:275.60px;height:2.80px;background:#fff;border-radius:0 0 0 2px;"></div>
<svg class="a" style="left:1177.40px;top:315.50px;" width="10" height="10" viewBox="0 0 10 10"><path d="M1.0 9.0L6.0 4.0" stroke="#5a5a5a" stroke-width="1.9" stroke-linecap="round"/><path d="M4.7 2.1L7.9 5.3" stroke="#333" stroke-width="1.3" stroke-linecap="round"/><path d="M6.7 3.3L8.5 1.5" stroke="#333" stroke-width="2.3" stroke-linecap="round"/></svg>
<div class="t" style="left:693.60px;top:333.00px;font-size:10.1px;color:#0d0d0d;">Material</div>
<div class="f" style="left:899.00px;top:330.30px;width:290.00px;height:12.80px;background:#ededed;"></div>
<div class="a" style="left:1174.60px;top:330.30px;width:14.40px;height:12.80px;background:#e4e4e4;border-radius:0 2px 2px 0;"></div>
<svg class="a" style="left:1177.10px;top:332.30px;" width="9" height="9" viewBox="0 0 9 9"><circle cx="4.5" cy="4.5" r="3.85" fill="none" stroke="#444" stroke-width="0.9"/><circle cx="4.5" cy="4.5" r="1.15" fill="#333"/></svg>
<div class="t" style="left:901.40px;top:333.00px;font-size:10.1px;color:#0d0d0d;">None (Material)</div>
<div class="t" style="left:693.60px;top:349.00px;font-size:10.1px;color:#0d0d0d;">Raycast Target</div>
<div class="cb" style="left:899.00px;top:348.00px;width:10.00px;height:10.00px;background:#f0f0f0;"></div>
<svg class="a" style="left:899.00px;top:348.00px;" width="10" height="10" viewBox="0 0 10.2 10.2"><path d="M2.4 5.4L4.3 7.3L8.2 2.9" fill="none" stroke="#222" stroke-width="1.25"/></svg>
<div class="t" style="left:693.60px;top:365.00px;font-size:10.1px;color:#0d0d0d;">Maskable</div>
<div class="cb" style="left:899.00px;top:364.00px;width:10.00px;height:10.00px;background:#f0f0f0;"></div>
<svg class="a" style="left:899.00px;top:364.00px;" width="10" height="10" viewBox="0 0 10.2 10.2"><path d="M2.4 5.4L4.3 7.3L8.2 2.9" fill="none" stroke="#222" stroke-width="1.25"/></svg>
<div class="t" style="left:695.75px;top:381.00px;font-size:10.1px;color:#0d0d0d;">Image Type</div>
<div class="dd" style="left:901.90px;top:377.90px;width:284.20px;height:13.10px;"></div>
<svg class="a" style="left:1176.10px;top:382.90px;" width="5.8" height="3.5" viewBox="0 0 5.8 3.5"><path d="M0 0H5.8L2.9 3.5Z" fill="#4a4a4a"/></svg>
<div class="t" style="left:904.40px;top:381.00px;font-size:10.1px;color:#0d0d0d;">Sliced</div>
<div class="t" style="left:707.75px;top:397.00px;font-size:10.1px;color:#0d0d0d;">Fill Center</div>
<div class="cb" style="left:902.00px;top:396.00px;width:9.40px;height:9.40px;background:#f0f0f0;"></div>
<svg class="a" style="left:902.00px;top:396.00px;" width="9.4" height="9.4" viewBox="0 0 10.2 10.2"><path d="M2.4 5.4L4.3 7.3L8.2 2.9" fill="none" stroke="#222" stroke-width="1.25"/></svg>
<div class="t" style="left:707.75px;top:413.00px;font-size:10.1px;color:#0d0d0d;">Pixels Per Unit Multiplier</div>
<div class="f" style="left:901.90px;top:410.20px;width:284.20px;height:12.80px;background:#f0f0f0;"></div>
<div class="t" style="left:904.20px;top:413.00px;font-size:10.1px;color:#0d0d0d;">1</div>
<div class="a" style="left:678.00px;top:429.00px;width:514.00px;height:1.00px;background:#8f8f8f;"></div>
<div class="a" style="left:678.00px;top:430.00px;width:514.00px;height:16.20px;background:#cccccc;"></div>
<div class="a" style="left:678.00px;top:446.00px;width:514.00px;height:1.00px;background:#bababa;"></div>
<svg class="a" style="left:683.00px;top:435.30px;" width="6.9" height="6.0" viewBox="0 0 6.9 6.0"><path d="M0 0H6.9L3.45 6.0Z" fill="#7d7d7d"/></svg>
<svg class="a" style="left:695.10px;top:433.00px;" width="10.4" height="10.4" viewBox="0 0 10.4 10.4"><circle cx="5.2" cy="5.2" r="4.7" fill="#bdbdbd" stroke="#777" stroke-width="0.8"/><circle cx="5.2" cy="5.2" r="3.1" fill="#555"/></svg>
<div class="cb" style="left:710.75px;top:433.30px;width:9.60px;height:9.60px;background:#f5f5f5;"></div>
<svg class="a" style="left:710.75px;top:433.30px;" width="9.6" height="9.6" viewBox="0 0 10.2 10.2"><path d="M2.4 5.4L4.3 7.3L8.2 2.9" fill="none" stroke="#222" stroke-width="1.25"/></svg>
<div class="t" style="left:726.10px;top:434.00px;font-size:9.7px;color:#0d0d0d;font-weight:bold;">Button</div>
<svg class="a" style="left:1146.05px;top:434.00px;" width="8.4" height="8.4" viewBox="0 0 8.4 8.4"><circle cx="4.2" cy="4.2" r="4.1" fill="#555"/><text x="4.2" y="6.9" font-size="7.6" font-weight="bold" text-anchor="middle" fill="#d6d6d6" font-family="Liberation Sans, sans-serif">?</text></svg>
<svg class="a" style="left:1161.60px;top:433.70px;" width="9" height="9" viewBox="0 0 9 9"><g stroke="#4d4d4d" stroke-width="1.1" fill="none"><path d="M0.3 2.4H4.4M6.5 2.4H8.7M0.4 6.6H2.0M4.4 6.6H8.7"/><path d="M5.5 0.6V4.2M3.3 4.8V8.4" stroke-width="1.5"/></g></svg>
<div class="a" style="left:1181.45px;top:434.15px;width:1.90px;height:1.90px;background:#333;border-radius:50%;"></div>
<div class="a" style="left:1181.45px;top:437.25px;width:1.90px;height:1.90px;background:#333;border-radius:50%;"></div>
<div class="a" style="left:1181.45px;top:440.35px;width:1.90px;height:1.90px;background:#333;border-radius:50%;"></div>
<div class="t" style="left:693.60px;top:453.00px;font-size:10.1px;color:#0d0d0d;">Interactable</div>
<div class="cb" style="left:899.00px;top:452.60px;width:10.00px;height:10.00px;background:#f0f0f0;"></div>
<svg class="a" style="left:899.00px;top:452.60px;" width="10" height="10" viewBox="0 0 10.2 10.2"><path d="M2.4 5.4L4.3 7.3L8.2 2.9" fill="none" stroke="#222" stroke-width="1.25"/></svg>
<div class="t" style="left:693.60px;top:469.00px;font-size:10.1px;color:#0d0d0d;">Transition</div>
<div class="dd" style="left:899.00px;top:467.20px;width:290.00px;height:12.90px;"></div>
<svg class="a" style="left:1178.60px;top:472.10px;" width="5.8" height="3.5" viewBox="0 0 5.8 3.5"><path d="M0 0H5.8L2.9 3.5Z" fill="#4a4a4a"/></svg>
<div class="t" style="left:902.10px;top:469.00px;font-size:10.1px;color:#0d0d0d;">Color Tint</div>
<div class="t" style="left:705.50px;top:485.00px;font-size:10.1px;color:#0d0d0d;">Target Graphic</div>
<div class="f" style="left:899.00px;top:482.90px;width:290.00px;height:13.00px;background:#ededed;"></div>
<div class="a" style="left:1174.60px;top:482.90px;width:14.40px;height:13.00px;background:#e4e4e4;border-radius:0 2px 2px 0;"></div>
<svg class="a" style="left:1177.10px;top:485.00px;" width="9" height="9" viewBox="0 0 9 9"><circle cx="4.5" cy="4.5" r="3.85" fill="none" stroke="#444" stroke-width="0.9"/><circle cx="4.5" cy="4.5" r="1.15" fill="#333"/></svg>
<svg class="a" style="left:901.90px;top:486.15px;" width="8.100000000000001" height="6.8999999999999995" viewBox="0 0 10.8 9.2"><rect x="1.1" y="1.1" width="8.6" height="7" fill="none" stroke="#3a3a3a" stroke-width="0.9"/><g fill="#3a3a3a"><rect x="0" y="0" width="2.2" height="2.2"/><rect x="8.6" y="0" width="2.2" height="2.2"/><rect x="0" y="7" width="2.2" height="2.2"/><rect x="8.6" y="7" width="2.2" height="2.2"/><path d="M2.4 6.9L4.6 4.2L6 5.8L7 4.8L8.6 6.9Z"/><circle cx="3.6" cy="3.2" r="0.7"/></g></svg>
<div class="t" style="left:911.90px;top:485.00px;font-size:10.1px;color:#0d0d0d;">Button (Image)</div>
<div class="t" style="left:705.50px;top:501.00px;font-size:10.1px;color:#0d0d0d;">Normal Color</div>
<div class="f" style="left:899.00px;top:498.80px;width:290.00px;height:13.10px;background:#c6c6c6;"></div>
<div class="a" style="left:899.00px;top:498.80px;width:275.60px;height:13.10px;background:#ffffff;border-radius:2px 0 0 2px;"></div>
<div class="a" style="left:899.00px;top:509.10px;width:275.60px;height:2.80px;background:#fff;border-radius:0 0 0 2px;"></div>
<svg class="a" style="left:1177.40px;top:500.25px;" width="10" height="10" viewBox="0 0 10 10"><path d="M1.0 9.0L6.0 4.0" stroke="#5a5a5a" stroke-width="1.9" stroke-linecap="round"/><path d="M4.7 2.1L7.9 5.3" stroke="#333" stroke-width="1.3" stroke-linecap="round"/><path d="M6.7 3.3L8.5 1.5" stroke="#333" stroke-width="2.3" stroke-linecap="round"/></svg>
<div class="t" style="left:705.50px;top:517.00px;font-size:10.1px;color:#0d0d0d;">Highlighted Color</div>
<div class="f" style="left:899.00px;top:514.80px;width:290.00px;height:13.10px;background:#c6c6c6;"></div>
<div class="a" style="left:899.00px;top:514.80px;width:275.60px;height:13.10px;background:#ff0000;border-radius:2px 0 0 2px;"></div>
<div class="a" style="left:899.00px;top:525.10px;width:275.60px;height:2.80px;background:#fff;border-radius:0 0 0 2px;"></div>
<svg class="a" style="left:1177.40px;top:516.25px;" width="10" height="10" viewBox="0 0 10 10"><path d="M1.0 9.0L6.0 4.0" stroke="#5a5a5a" stroke-width="1.9" stroke-linecap="round"/><path d="M4.7 2.1L7.9 5.3" stroke="#333" stroke-width="1.3" stroke-linecap="round"/><path d="M6.7 3.3L8.5 1.5" stroke="#333" stroke-width="2.3" stroke-linecap="round"/></svg>
<div class="t" style="left:705.50px;top:533.00px;font-size:10.1px;color:#0d0d0d;">Pressed Color</div>
<div class="f" style="left:899.00px;top:530.70px;width:290.00px;height:13.10px;background:#c6c6c6;"></div>
<div class="a" style="left:899.00px;top:530.70px;width:275.60px;height:13.10px;background:#ff00dc;border-radius:2px 0 0 2px;"></div>
<div class="a" style="left:899.00px;top:541.00px;width:275.60px;height:2.80px;background:#fff;border-radius:0 0 0 2px;"></div>
<svg class="a" style="left:1177.40px;top:532.15px;" width="10" height="10" viewBox="0 0 10 10"><path d="M1.0 9.0L6.0 4.0" stroke="#5a5a5a" stroke-width="1.9" stroke-linecap="round"/><path d="M4.7 2.1L7.9 5.3" stroke="#333" stroke-width="1.3" stroke-linecap="round"/><path d="M6.7 3.3L8.5 1.5" stroke="#333" stroke-width="2.3" stroke-linecap="round"/></svg>
<div class="t" style="left:705.50px;top:549.00px;font-size:10.1px;color:#0d0d0d;">Selected Color</div>
<div class="f" style="left:899.00px;top:546.70px;width:290.00px;height:13.10px;background:#c6c6c6;"></div>
<div class="a" style="left:899.00px;top:546.70px;width:275.60px;height:13.10px;background:#00ff0c;border-radius:2px 0 0 2px;"></div>
<div class="a" style="left:899.00px;top:557.00px;width:275.60px;height:2.80px;background:#fff;border-radius:0 0 0 2px;"></div>
<svg class="a" style="left:1177.40px;top:548.15px;" width="10" height="10" viewBox="0 0 10 10"><path d="M1.0 9.0L6.0 4.0" stroke="#5a5a5a" stroke-width="1.9" stroke-linecap="round"/><path d="M4.7 2.1L7.9 5.3" stroke="#333" stroke-width="1.3" stroke-linecap="round"/><path d="M6.7 3.3L8.5 1.5" stroke="#333" stroke-width="2.3" stroke-linecap="round"/></svg>
<div class="t" style="left:705.50px;top:565.00px;font-size:10.1px;color:#0d0d0d;">Disabled Color</div>
<div class="f" style="left:899.00px;top:562.70px;width:290.00px;height:13.10px;background:#c6c6c6;"></div>
<div class="a" style="left:899.00px;top:562.70px;width:275.60px;height:13.10px;background:#c8c8c8;border-radius:2px 0 0 2px;"></div>
<div class="a" style="left:899.00px;top:573.00px;width:275.60px;height:2.80px;background:#fff;border-radius:0 0 0 2px;"></div>
<div class="a" style="left:1037.80px;top:573.00px;width:136.80px;height:2.80px;background:#000;"></div>
<svg class="a" style="left:1177.40px;top:564.15px;" width="10" height="10" viewBox="0 0 10 10"><path d="M1.0 9.0L6.0 4.0" stroke="#5a5a5a" stroke-width="1.9" stroke-linecap="round"/><path d="M4.7 2.1L7.9 5.3" stroke="#333" stroke-width="1.3" stroke-linecap="round"/><path d="M6.7 3.3L8.5 1.5" stroke="#333" stroke-width="2.3" stroke-linecap="round"/></svg>
<div class="t" style="left:705.50px;top:581.00px;font-size:10.1px;color:#0d0d0d;">Color Multiplier</div>
<div class="a" style="left:902.00px;top:585.00px;width:243.40px;height:1.00px;background:#8c8c8c;"></div>
<div class="a" style="left:899.10px;top:581.80px;width:7.40px;height:7.40px;background:#666;border-radius:50%;"></div>
<div class="f" style="left:1150.80px;top:579.60px;width:38.20px;height:12.70px;background:#f0f0f0;"></div>
<div class="t" style="left:1152.40px;top:581.00px;font-size:10.1px;color:#0d0d0d;">1</div>
<div class="t" style="left:705.50px;top:597.00px;font-size:10.1px;color:#0d0d0d;">Fade Duration</div>
<div class="f" style="left:899.00px;top:595.40px;width:290.00px;height:12.70px;background:#f0f0f0;"></div>
<div class="t" style="left:901.40px;top:597.00px;font-size:10.1px;color:#0d0d0d;">0.1</div>
<div class="t" style="left:693.60px;top:620.00px;font-size:10.1px;color:#0d0d0d;">Navigation</div>
<div class="dd" style="left:899.00px;top:617.70px;width:290.00px;height:12.70px;"></div>
<svg class="a" style="left:1178.60px;top:622.50px;" width="5.8" height="3.5" viewBox="0 0 5.8 3.5"><path d="M0 0H5.8L2.9 3.5Z" fill="#4a4a4a"/></svg>
<div class="t" style="left:902.10px;top:620.00px;font-size:10.1px;color:#0d0d0d;">Automatic</div>
<div class="btn" style="left:898.00px;top:635.20px;width:291.00px;height:13.20px;"></div>
<div class="t" style="left:1042.30px;top:637.00px;font-size:10.1px;color:#0d0d0d;transform:translateX(-50%);">Visualize</div>
<div class="a" style="left:692.40px;top:656.60px;width:496.60px;height:30.00px;background:#c8c8c8;border:1px solid #a2a2a2;border-radius:2.4px;"></div>
<div class="a" style="left:692.40px;top:656.60px;width:496.60px;height:15.80px;background:#b4b4b4;border:1px solid #a2a2a2;border-radius:2.4px 2.4px 0 0;"></div>
<div class="t" style="left:699.00px;top:661.00px;font-size:10.1px;color:#0d0d0d;">On Click ()</div>
</div></body></html>
